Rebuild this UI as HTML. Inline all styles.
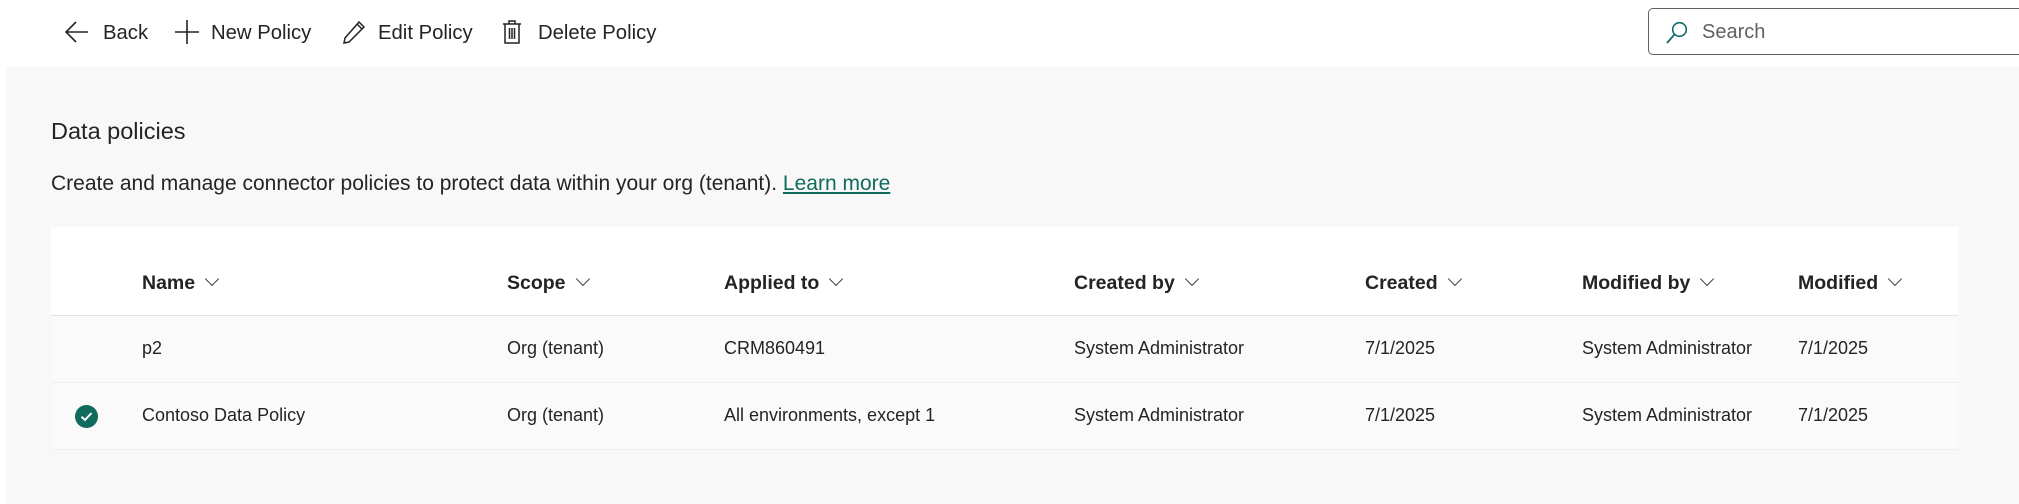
<!DOCTYPE html>
<html><head><meta charset="utf-8"><style>
*{margin:0;padding:0;box-sizing:border-box}
body{width:2019px;height:504px;background:#f8f8f8;font-family:"Liberation Sans",sans-serif;color:#242424;position:relative;overflow:hidden}
.top{position:absolute;left:6px;top:0;width:2013px;height:66px;background:#fff}
.lstrip{position:absolute;left:0;top:0;width:6px;height:504px;background:#fff}
.t{position:absolute;white-space:nowrap}
.cmd{font-size:20.3px;top:22px}
.search{position:absolute;left:1648px;top:8px;width:380px;height:47px;border:1px solid #616161;border-radius:5px;background:#fff}
.card{position:absolute;left:51px;top:227px;width:1907px;height:222px;background:#fafafa}
.hdr{position:absolute;left:0;top:0;width:100%;height:89px;background:#fff;border-bottom:1.5px solid #e0e0e0}
.rowb{position:absolute;left:0;top:155px;width:100%;border-top:1px solid #efefef}
.h{font-size:19.5px;font-weight:bold;top:272px}
.c{font-size:18px}
.chev{display:inline-block;width:10px;height:10px;border-right:1.3px solid #424242;border-bottom:1.3px solid #424242;transform:rotate(45deg);margin-left:12px;position:relative;top:-5px}
</style></head><body>
<div class="lstrip"></div>
<div class="top"></div>
<svg style="position:absolute;left:64px;top:20px" width="26" height="24" viewBox="0 0 26 24"><path d="M12 2 L2 12 L12 22 M2 12 H24" fill="none" stroke="#242424" stroke-width="1.6"/></svg>
<div class="t cmd" style="left:103px">Back</div>
<svg style="position:absolute;left:175px;top:19px" width="24" height="26" viewBox="0 0 24 26"><path d="M12 1 V25 M0 13 H24" stroke="#242424" stroke-width="1.6"/></svg>
<div class="t cmd" style="left:211px">New Policy</div>
<svg style="position:absolute;left:342px;top:20px" width="24" height="24" viewBox="0 0 24 24"><path d="M17 2 L22 7 L7 22 L2 23 L3 18 Z M15 4 L20 9" fill="none" stroke="#242424" stroke-width="1.5"/></svg>
<div class="t cmd" style="left:378px">Edit Policy</div>
<svg style="position:absolute;left:502px;top:19px" width="20" height="26" viewBox="0 0 20 26"><path d="M1 5 H19 M7 5 V2 H13 V5 M3 5 V24 H17 V5 M7.5 9 V20 M10 9 V20 M12.5 9 V20" fill="none" stroke="#242424" stroke-width="1.5"/></svg>
<div class="t cmd" style="left:538px">Delete Policy</div>
<div class="search"></div>
<svg style="position:absolute;left:1666px;top:21px" width="22" height="23" viewBox="0 0 22 23"><circle cx="13.5" cy="8.5" r="6.8" fill="none" stroke="#0f6e6a" stroke-width="1.6"/><path d="M8.5 13.5 L1 22" stroke="#0f6e6a" stroke-width="1.8"/></svg>
<div class="t" style="left:1702px;top:21px;font-size:20px;color:#616161">Search</div>
<div class="t" style="left:51px;top:118px;font-size:23.5px">Data policies</div>
<div class="t" style="left:51px;top:172px;font-size:21px">Create and manage connector policies to protect data within your org (tenant). <span style="color:#0f6b5e;text-decoration:underline">Learn more</span></div>
<div class="card"><div class="hdr"></div><div class="rowb"></div><div class="rowb" style="top:222px"></div></div>
<div class="t h" style="left:142px">Name<span class="chev"></span></div>
<div class="t h" style="left:507px">Scope<span class="chev"></span></div>
<div class="t h" style="left:724px">Applied to<span class="chev"></span></div>
<div class="t h" style="left:1074px">Created by<span class="chev"></span></div>
<div class="t h" style="left:1365px">Created<span class="chev"></span></div>
<div class="t h" style="left:1582px">Modified by<span class="chev"></span></div>
<div class="t h" style="left:1798px">Modified<span class="chev"></span></div>
<div class="t c" style="left:142px;top:338px">p2</div>
<div class="t c" style="left:507px;top:338px">Org (tenant)</div>
<div class="t c" style="left:724px;top:338px">CRM860491</div>
<div class="t c" style="left:1074px;top:338px">System Administrator</div>
<div class="t c" style="left:1365px;top:338px">7/1/2025</div>
<div class="t c" style="left:1582px;top:338px">System Administrator</div>
<div class="t c" style="left:1798px;top:338px">7/1/2025</div>
<svg style="position:absolute;left:75px;top:405px" width="23" height="23" viewBox="0 0 23 23"><circle cx="11.5" cy="11.5" r="11.5" fill="#0f6b5e"/><path d="M6.5 11.8 L10 15 L16.5 8" fill="none" stroke="#fff" stroke-width="2"/></svg>
<div class="t c" style="left:142px;top:405px">Contoso Data Policy</div>
<div class="t c" style="left:507px;top:405px">Org (tenant)</div>
<div class="t c" style="left:724px;top:405px">All environments, except 1</div>
<div class="t c" style="left:1074px;top:405px">System Administrator</div>
<div class="t c" style="left:1365px;top:405px">7/1/2025</div>
<div class="t c" style="left:1582px;top:405px">System Administrator</div>
<div class="t c" style="left:1798px;top:405px">7/1/2025</div>
</body></html>
